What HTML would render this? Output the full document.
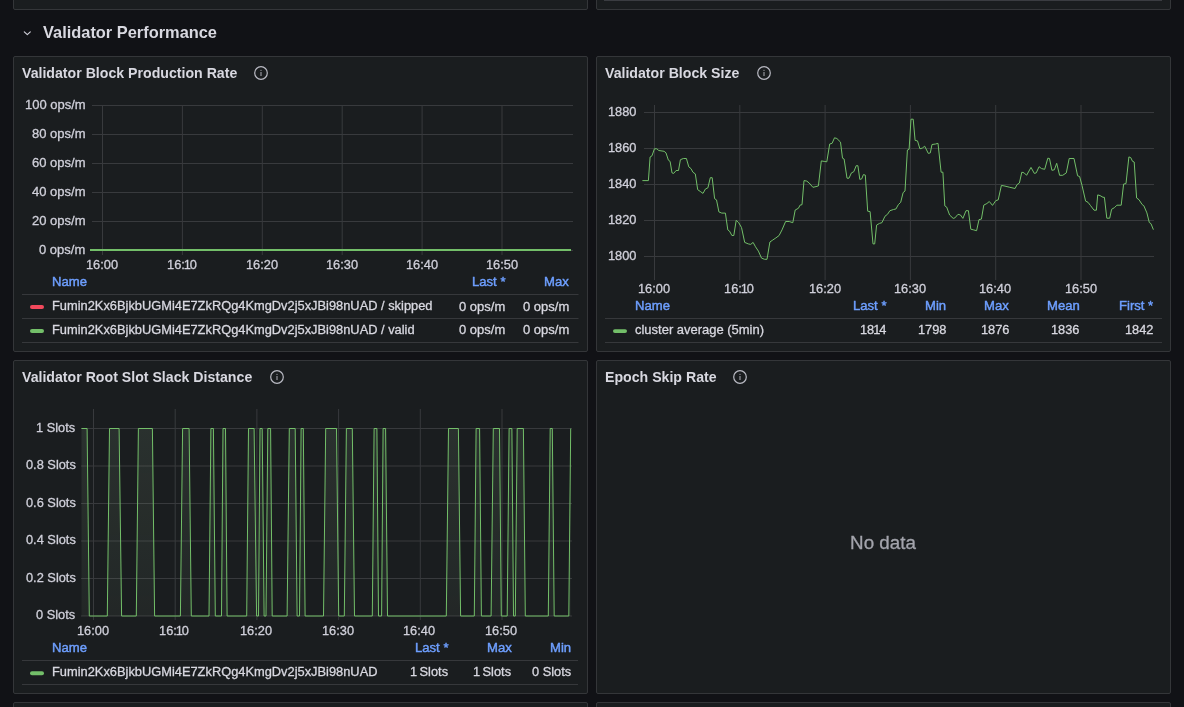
<!DOCTYPE html>
<html><head><meta charset="utf-8"><style>
html,body{margin:0;padding:0;width:1184px;height:707px;overflow:hidden;background:#111216;}
body{position:relative;font-family:"Liberation Sans",sans-serif;}
.p{position:absolute;background:#1a1d1f;border:1px solid #343639;border-radius:2px;}
.t{position:absolute;white-space:nowrap;line-height:1;will-change:transform;-webkit-text-stroke:0.3px currentColor;}
</style></head><body>
<div class="p" style="left:13px;top:-40px;width:573px;height:48px"></div>
<div class="p" style="left:596px;top:-40px;width:573px;height:48px"></div>
<div style="position:absolute;left:604px;top:0;width:558px;height:1px;background:#3a3c41"></div>
<svg style="position:absolute;left:0;top:0" width="60" height="50"><polyline points="24.3,31.8 27.3,34.6 30.3,31.8" fill="none" stroke="#d0d0da" stroke-width="1.15" stroke-linecap="round" stroke-linejoin="round"/></svg>
<div class="t" style="left:42.5px;top:23.82px;font-size:16.4px;font-weight:700;color:#d8d8e0;-webkit-text-stroke:0;">Validator Performance</div>
<div class="p" style="left:13px;top:56px;width:573px;height:294px"></div>
<div class="p" style="left:596px;top:56px;width:573px;height:294px"></div>
<div class="p" style="left:13px;top:360px;width:573px;height:332px"></div>
<div class="p" style="left:596px;top:360px;width:573px;height:332px"></div>
<div class="p" style="left:13px;top:702px;width:573px;height:56px"></div>
<div class="p" style="left:596px;top:702px;width:573px;height:56px"></div>
<div class="t" style="left:21.6px;top:66.42px;font-size:14.15px;font-weight:700;color:#d8d8e0;-webkit-text-stroke:0;">Validator Block Production Rate</div>
<svg style="position:absolute;left:253px;top:65.2px" width="16" height="16"><circle cx="8" cy="8" r="6.3" fill="none" stroke="#b9bac3" stroke-width="1.2"/><rect x="7.45" y="7.0" width="1.1" height="4.0" fill="#9fa0a8"/><circle cx="8" cy="5.3" r="0.65" fill="#9fa0a8"/></svg>
<div class="t" style="left:605.4px;top:66.42px;font-size:14.15px;font-weight:700;color:#d8d8e0;-webkit-text-stroke:0;">Validator Block Size</div>
<svg style="position:absolute;left:756px;top:65.2px" width="16" height="16"><circle cx="8" cy="8" r="6.3" fill="none" stroke="#b9bac3" stroke-width="1.2"/><rect x="7.45" y="7.0" width="1.1" height="4.0" fill="#9fa0a8"/><circle cx="8" cy="5.3" r="0.65" fill="#9fa0a8"/></svg>
<div class="t" style="left:21.6px;top:370.42px;font-size:14.15px;font-weight:700;color:#d8d8e0;-webkit-text-stroke:0;">Validator Root Slot Slack Distance</div>
<svg style="position:absolute;left:269.2px;top:369.2px" width="16" height="16"><circle cx="8" cy="8" r="6.3" fill="none" stroke="#b9bac3" stroke-width="1.2"/><rect x="7.45" y="7.0" width="1.1" height="4.0" fill="#9fa0a8"/><circle cx="8" cy="5.3" r="0.65" fill="#9fa0a8"/></svg>
<div class="t" style="left:605.4px;top:370.42px;font-size:14.15px;font-weight:700;color:#d8d8e0;-webkit-text-stroke:0;">Epoch Skip Rate</div>
<svg style="position:absolute;left:732px;top:369.2px" width="16" height="16"><circle cx="8" cy="8" r="6.3" fill="none" stroke="#b9bac3" stroke-width="1.2"/><rect x="7.45" y="7.0" width="1.1" height="4.0" fill="#9fa0a8"/><circle cx="8" cy="5.3" r="0.65" fill="#9fa0a8"/></svg>
<svg style="position:absolute;left:0;top:0" width="1184" height="707"><line x1="92" y1="105.5" x2="573" y2="105.5" stroke="#383a3d" stroke-width="1"/><line x1="92" y1="134.5" x2="573" y2="134.5" stroke="#383a3d" stroke-width="1"/><line x1="92" y1="163.5" x2="573" y2="163.5" stroke="#383a3d" stroke-width="1"/><line x1="92" y1="192.5" x2="573" y2="192.5" stroke="#383a3d" stroke-width="1"/><line x1="92" y1="221.5" x2="573" y2="221.5" stroke="#383a3d" stroke-width="1"/><line x1="92" y1="250.5" x2="573" y2="250.5" stroke="#383a3d" stroke-width="1"/><line x1="102.5" y1="105" x2="102.5" y2="255" stroke="#383a3d" stroke-width="1"/><line x1="182.4" y1="105" x2="182.4" y2="255" stroke="#383a3d" stroke-width="1"/><line x1="262.3" y1="105" x2="262.3" y2="255" stroke="#383a3d" stroke-width="1"/><line x1="342.2" y1="105" x2="342.2" y2="255" stroke="#383a3d" stroke-width="1"/><line x1="422.1" y1="105" x2="422.1" y2="255" stroke="#383a3d" stroke-width="1"/><line x1="502.0" y1="105" x2="502.0" y2="255" stroke="#383a3d" stroke-width="1"/><line x1="90" y1="250" x2="571" y2="250" stroke="#73bf69" stroke-width="2"/><line x1="644" y1="112.5" x2="1154" y2="112.5" stroke="#383a3d" stroke-width="1"/><line x1="644" y1="148.5" x2="1154" y2="148.5" stroke="#383a3d" stroke-width="1"/><line x1="644" y1="184.5" x2="1154" y2="184.5" stroke="#383a3d" stroke-width="1"/><line x1="644" y1="220.5" x2="1154" y2="220.5" stroke="#383a3d" stroke-width="1"/><line x1="644" y1="256.5" x2="1154" y2="256.5" stroke="#383a3d" stroke-width="1"/><line x1="654.5" y1="105" x2="654.5" y2="280" stroke="#383a3d" stroke-width="1"/><line x1="739.8" y1="105" x2="739.8" y2="280" stroke="#383a3d" stroke-width="1"/><line x1="825.1" y1="105" x2="825.1" y2="280" stroke="#383a3d" stroke-width="1"/><line x1="910.4" y1="105" x2="910.4" y2="280" stroke="#383a3d" stroke-width="1"/><line x1="995.7" y1="105" x2="995.7" y2="280" stroke="#383a3d" stroke-width="1"/><line x1="1081.0" y1="105" x2="1081.0" y2="280" stroke="#383a3d" stroke-width="1"/><polyline points="642.4,180.6 648.4,180.6 650.1,157.0 652.0,155.8 654.4,148.8 656.8,148.8 658.8,150.5 664.1,151.3 666.0,152.9 668.4,160.2 670.1,161.4 672.0,172.9 673.7,173.4 676.1,170.5 678.5,170.5 680.4,159.7 683.3,158.5 686.4,158.5 688.8,166.9 691.0,168.6 692.9,172.2 695.3,173.9 697.7,189.7 700.2,191.4 703.0,193.4 705.4,189.0 707.9,187.8 710.3,177.7 712.2,177.7 714.6,198.7 716.5,199.9 718.9,211.9 721.8,213.1 725.4,213.1 727.8,229.9 729.5,231.1 731.9,235.5 733.8,235.5 736.2,220.3 738.7,222.7 741.5,227.5 744.7,242.4 748.3,243.9 750.7,244.4 753.1,242.4 755.5,246.8 758.4,251.1 761.5,258.1 764.6,259.3 767.0,259.3 769.9,242.0 772.8,240.0 775.9,237.9 779.1,235.5 782.0,229.9 785.6,221.5 789.2,221.5 792.8,222.7 795.2,210.0 798.4,208.3 800.1,205.1 802.0,204.7 804.0,180.6 806.8,181.1 809.2,183.0 812.9,187.3 816.0,186.6 818.4,185.9 821.3,160.9 824.2,161.4 826.8,161.8 829.7,144.0 832.1,143.3 834.5,137.8 836.9,138.5 840.5,142.1 842.5,158.2 844.1,159.0 847.0,178.2 849.0,178.2 851.4,172.9 853.8,171.7 856.2,165.7 857.9,165.7 859.8,179.4 861.7,178.9 863.4,174.6 865.3,175.1 867.7,211.2 870.1,211.6 873.0,243.9 874.7,243.9 876.6,225.1 879.5,223.4 881.9,222.7 885.0,216.2 887.5,214.3 889.9,210.7 893.5,209.5 895.9,209.0 898.3,204.7 900.7,202.3 903.1,192.6 905.0,191.0 907.4,150.0 909.1,149.3 911.0,119.2 913.2,119.2 915.1,140.4 917.5,140.9 919.9,148.8 922.3,148.1 924.7,146.2 928.3,153.4 930.3,152.9 932.0,144.5 935.6,144.0 938.0,143.3 941.1,172.2 942.9,172.2 944.8,205.9 946.7,207.1 949.6,215.0 953.2,218.4 954.9,217.9 958.0,214.3 960.5,215.0 962.9,218.4 966.0,210.7 968.4,210.7 970.8,229.2 973.7,229.9 976.6,230.7 979.0,219.6 981.4,219.1 983.8,205.1 986.9,203.5 989.3,201.5 992.5,205.4 995.8,200.6 998.2,199.9 1001.4,185.4 1005.0,186.1 1009.8,187.3 1015.1,188.5 1017.0,184.7 1019.4,183.0 1021.8,172.2 1024.2,172.9 1026.6,175.3 1031.0,167.4 1034.3,173.4 1036.2,172.9 1039.1,166.7 1041.5,168.6 1044.7,169.3 1047.8,158.2 1049.5,158.5 1051.9,170.3 1054.3,169.8 1056.7,163.3 1059.6,175.3 1062.7,175.3 1066.3,172.9 1069.2,158.5 1074.0,158.5 1077.6,175.8 1079.6,176.5 1082.0,185.4 1085.6,201.1 1088.0,202.3 1090.4,205.4 1094.0,210.2 1096.4,210.2 1097.7,194.9 1100.1,195.6 1103.0,197.3 1104.4,197.3 1106.8,218.2 1109.7,218.2 1111.6,209.3 1114.5,207.6 1116.9,205.2 1121.2,205.2 1123.6,184.1 1126.0,183.6 1128.9,156.9 1130.8,157.7 1132.5,161.3 1134.2,162.0 1136.6,198.0 1139.0,199.7 1142.1,204.5 1143.8,205.7 1146.9,212.9 1149.3,222.5 1151.0,223.7 1153.4,229.7" fill="none" stroke="#73bf69" stroke-width="1" stroke-linejoin="round"/><line x1="81" y1="428.5" x2="572" y2="428.5" stroke="#383a3d" stroke-width="1"/><line x1="81" y1="466.0" x2="572" y2="466.0" stroke="#383a3d" stroke-width="1"/><line x1="81" y1="503.5" x2="572" y2="503.5" stroke="#383a3d" stroke-width="1"/><line x1="81" y1="541.0" x2="572" y2="541.0" stroke="#383a3d" stroke-width="1"/><line x1="81" y1="578.5" x2="572" y2="578.5" stroke="#383a3d" stroke-width="1"/><line x1="81" y1="616.0" x2="572" y2="616.0" stroke="#383a3d" stroke-width="1"/><line x1="93.5" y1="409" x2="93.5" y2="620" stroke="#383a3d" stroke-width="1"/><line x1="175.2" y1="409" x2="175.2" y2="620" stroke="#383a3d" stroke-width="1"/><line x1="256.9" y1="409" x2="256.9" y2="620" stroke="#383a3d" stroke-width="1"/><line x1="338.6" y1="409" x2="338.6" y2="620" stroke="#383a3d" stroke-width="1"/><line x1="420.3" y1="409" x2="420.3" y2="620" stroke="#383a3d" stroke-width="1"/><line x1="502.0" y1="409" x2="502.0" y2="620" stroke="#383a3d" stroke-width="1"/><defs><linearGradient id="gf" x1="0" y1="0" x2="0" y2="1"><stop offset="0" stop-color="#9ab896" stop-opacity="0.13"/><stop offset="1" stop-color="#9ab896" stop-opacity="0.07"/></linearGradient></defs><polygon points="81.5,428.5 87.1,428.5 89.3,616.0 107.3,616.0 109.5,428.5 119.1,428.5 121.6,616.0 136.3,616.0 138.4,428.5 152.4,428.5 154.6,616.0 180.4,616.0 182.6,428.5 189.1,428.5 191.3,616.0 209.0,616.0 210.9,428.5 213.4,428.5 215.3,616.0 221.5,616.0 223.0,428.5 225.5,428.5 227.1,616.0 246.7,616.0 248.5,428.5 254.1,428.5 256.6,616.0 258.5,616.0 260.0,428.5 262.2,428.5 264.1,616.0 266.0,616.0 267.8,428.5 270.6,428.5 272.2,616.0 287.1,616.0 289.3,428.5 295.2,428.5 297.1,616.0 299.5,616.0 301.1,428.5 303.3,428.5 305.1,616.0 323.5,616.0 325.7,428.5 336.5,428.5 338.7,616.0 344.3,616.0 346.4,428.5 352.3,428.5 354.5,616.0 372.3,616.0 374.1,428.5 376.9,428.5 378.5,616.0 381.6,616.0 383.1,428.5 385.6,428.5 387.5,616.0 446.3,616.0 448.5,428.5 458.4,428.5 460.6,616.0 474.3,616.0 476.1,428.5 479.6,428.5 481.4,616.0 491.1,616.0 493.3,428.5 499.5,428.5 501.3,616.0 507.2,616.0 509.1,428.5 511.9,428.5 513.5,616.0 515.3,616.0 517.2,428.5 523.4,428.5 525.3,616.0 548.3,616.0 550.2,428.5 552.3,428.5 554.2,616.0 568.8,616.0 570.7,428.5 570.7,616.0 81.5,616.0" fill="url(#gf)"/><polyline points="81.5,428.5 87.1,428.5 89.3,616.0 107.3,616.0 109.5,428.5 119.1,428.5 121.6,616.0 136.3,616.0 138.4,428.5 152.4,428.5 154.6,616.0 180.4,616.0 182.6,428.5 189.1,428.5 191.3,616.0 209.0,616.0 210.9,428.5 213.4,428.5 215.3,616.0 221.5,616.0 223.0,428.5 225.5,428.5 227.1,616.0 246.7,616.0 248.5,428.5 254.1,428.5 256.6,616.0 258.5,616.0 260.0,428.5 262.2,428.5 264.1,616.0 266.0,616.0 267.8,428.5 270.6,428.5 272.2,616.0 287.1,616.0 289.3,428.5 295.2,428.5 297.1,616.0 299.5,616.0 301.1,428.5 303.3,428.5 305.1,616.0 323.5,616.0 325.7,428.5 336.5,428.5 338.7,616.0 344.3,616.0 346.4,428.5 352.3,428.5 354.5,616.0 372.3,616.0 374.1,428.5 376.9,428.5 378.5,616.0 381.6,616.0 383.1,428.5 385.6,428.5 387.5,616.0 446.3,616.0 448.5,428.5 458.4,428.5 460.6,616.0 474.3,616.0 476.1,428.5 479.6,428.5 481.4,616.0 491.1,616.0 493.3,428.5 499.5,428.5 501.3,616.0 507.2,616.0 509.1,428.5 511.9,428.5 513.5,616.0 515.3,616.0 517.2,428.5 523.4,428.5 525.3,616.0 548.3,616.0 550.2,428.5 552.3,428.5 554.2,616.0 568.8,616.0 570.7,428.5" fill="none" stroke="#73bf69" stroke-width="1" stroke-linejoin="round"/><line x1="22" y1="294.5" x2="578.5" y2="294.5" stroke="#36383b" stroke-width="1"/><line x1="22" y1="318.5" x2="578.5" y2="318.5" stroke="#36383b" stroke-width="1"/><line x1="22" y1="342.5" x2="578.5" y2="342.5" stroke="#36383b" stroke-width="1"/><line x1="605" y1="318.5" x2="1162" y2="318.5" stroke="#36383b" stroke-width="1"/><line x1="605" y1="342.5" x2="1162" y2="342.5" stroke="#36383b" stroke-width="1"/><line x1="22" y1="660.5" x2="578" y2="660.5" stroke="#36383b" stroke-width="1"/><line x1="22" y1="684.5" x2="578" y2="684.5" stroke="#36383b" stroke-width="1"/><rect x="30" y="305" width="14" height="4" rx="2" fill="#f2495c"/><rect x="30" y="329" width="14" height="4" rx="2" fill="#73bf69"/><rect x="613" y="329.2" width="14" height="3.8" rx="1.9" fill="#73bf69"/><rect x="30" y="671.2" width="14" height="4" rx="2" fill="#73bf69"/></svg>
<div class="t" style="right:1098.4px;top:97.60px;font-size:13px;font-weight:400;color:#d0d0da;">100 ops/m</div>
<div class="t" style="right:1098.4px;top:126.60px;font-size:13px;font-weight:400;color:#d0d0da;">80 ops/m</div>
<div class="t" style="right:1098.4px;top:155.60px;font-size:13px;font-weight:400;color:#d0d0da;">60 ops/m</div>
<div class="t" style="right:1098.4px;top:184.60px;font-size:13px;font-weight:400;color:#d0d0da;">40 ops/m</div>
<div class="t" style="right:1098.4px;top:213.60px;font-size:13px;font-weight:400;color:#d0d0da;">20 ops/m</div>
<div class="t" style="right:1098.4px;top:242.60px;font-size:13px;font-weight:400;color:#d0d0da;">0 ops/m</div>
<div class="t" style="left:101.8px;transform:translateX(-50%);top:259.36px;font-size:12.8px;font-weight:400;color:#d0d0da;">16:00</div>
<div class="t" style="left:181.75px;transform:translateX(-50%);top:259.36px;font-size:12.8px;font-weight:400;color:#d0d0da;">16:<span style="margin-left:-1.1px;letter-spacing:-1px">1</span>0</div>
<div class="t" style="left:261.7px;transform:translateX(-50%);top:259.36px;font-size:12.8px;font-weight:400;color:#d0d0da;">16:20</div>
<div class="t" style="left:341.65000000000003px;transform:translateX(-50%);top:259.36px;font-size:12.8px;font-weight:400;color:#d0d0da;">16:30</div>
<div class="t" style="left:421.6px;transform:translateX(-50%);top:259.36px;font-size:12.8px;font-weight:400;color:#d0d0da;">16:40</div>
<div class="t" style="left:501.55px;transform:translateX(-50%);top:259.36px;font-size:12.8px;font-weight:400;color:#d0d0da;">16:50</div>
<div class="t" style="left:52.4px;top:275.31px;font-size:13.1px;font-weight:400;color:#6e9fff;-webkit-text-stroke:0.45px currentColor;">Name</div>
<div class="t" style="right:678.6px;top:275.31px;font-size:13.1px;font-weight:400;color:#6e9fff;-webkit-text-stroke:0.45px currentColor;">Last *</div>
<div class="t" style="right:615.4px;top:275.31px;font-size:13.1px;font-weight:400;color:#6e9fff;-webkit-text-stroke:0.45px currentColor;">Max</div>
<div class="t" style="left:52.4px;top:299.62px;font-size:12.85px;font-weight:400;color:#d8d8e0;">Fumin2Kx6BjkbUGMi4E7ZkRQg4KmgDv2j5xJBi98nUAD / skipped</div>
<div class="t" style="right:678.3px;top:299.50px;font-size:13px;font-weight:400;color:#d8d8e0;">0 ops/m</div>
<div class="t" style="right:614.4px;top:299.50px;font-size:13px;font-weight:400;color:#d8d8e0;">0 ops/m</div>
<div class="t" style="left:52.4px;top:323.52px;font-size:12.85px;font-weight:400;color:#d8d8e0;">Fumin2Kx6BjkbUGMi4E7ZkRQg4KmgDv2j5xJBi98nUAD / valid</div>
<div class="t" style="right:678.3px;top:323.40px;font-size:13px;font-weight:400;color:#d8d8e0;">0 ops/m</div>
<div class="t" style="right:614.4px;top:323.40px;font-size:13px;font-weight:400;color:#d8d8e0;">0 ops/m</div>
<div class="t" style="right:547.4px;top:106.26px;font-size:12.8px;font-weight:400;color:#d0d0da;">1880</div>
<div class="t" style="right:547.4px;top:142.26px;font-size:12.8px;font-weight:400;color:#d0d0da;">1860</div>
<div class="t" style="right:547.4px;top:178.26px;font-size:12.8px;font-weight:400;color:#d0d0da;">1840</div>
<div class="t" style="right:547.4px;top:214.26px;font-size:12.8px;font-weight:400;color:#d0d0da;">1820</div>
<div class="t" style="right:547.4px;top:250.26px;font-size:12.8px;font-weight:400;color:#d0d0da;">1800</div>
<div class="t" style="left:653.7px;transform:translateX(-50%);top:283.16px;font-size:12.8px;font-weight:400;color:#d0d0da;">16:00</div>
<div class="t" style="left:739.1px;transform:translateX(-50%);top:283.16px;font-size:12.8px;font-weight:400;color:#d0d0da;">16:<span style="margin-left:-1.1px;letter-spacing:-1px">1</span>0</div>
<div class="t" style="left:824.5px;transform:translateX(-50%);top:283.16px;font-size:12.8px;font-weight:400;color:#d0d0da;">16:20</div>
<div class="t" style="left:909.9000000000001px;transform:translateX(-50%);top:283.16px;font-size:12.8px;font-weight:400;color:#d0d0da;">16:30</div>
<div class="t" style="left:995.3000000000001px;transform:translateX(-50%);top:283.16px;font-size:12.8px;font-weight:400;color:#d0d0da;">16:40</div>
<div class="t" style="left:1080.7px;transform:translateX(-50%);top:283.16px;font-size:12.8px;font-weight:400;color:#d0d0da;">16:50</div>
<div class="t" style="left:635.4px;top:299.11px;font-size:13.1px;font-weight:400;color:#6e9fff;-webkit-text-stroke:0.45px currentColor;">Name</div>
<div class="t" style="right:297.6px;top:299.11px;font-size:13.1px;font-weight:400;color:#6e9fff;-webkit-text-stroke:0.45px currentColor;">Last *</div>
<div class="t" style="right:297.6px;top:323.56px;font-size:12.8px;font-weight:400;color:#d8d8e0;">18<span style="margin-left:-1.1px;letter-spacing:-1px">1</span>4</div>
<div class="t" style="right:237.60000000000002px;top:299.11px;font-size:13.1px;font-weight:400;color:#6e9fff;-webkit-text-stroke:0.45px currentColor;">Min</div>
<div class="t" style="right:237.60000000000002px;top:323.56px;font-size:12.8px;font-weight:400;color:#d8d8e0;">1798</div>
<div class="t" style="right:175px;top:299.11px;font-size:13.1px;font-weight:400;color:#6e9fff;-webkit-text-stroke:0.45px currentColor;">Max</div>
<div class="t" style="right:175px;top:323.56px;font-size:12.8px;font-weight:400;color:#d8d8e0;">1876</div>
<div class="t" style="right:104.09999999999991px;top:299.11px;font-size:13.1px;font-weight:400;color:#6e9fff;-webkit-text-stroke:0.45px currentColor;">Mean</div>
<div class="t" style="right:104.09999999999991px;top:323.56px;font-size:12.8px;font-weight:400;color:#d8d8e0;">1836</div>
<div class="t" style="right:30.799999999999955px;top:299.11px;font-size:13.1px;font-weight:400;color:#6e9fff;-webkit-text-stroke:0.45px currentColor;">First *</div>
<div class="t" style="right:30.799999999999955px;top:323.56px;font-size:12.8px;font-weight:400;color:#d8d8e0;">1842</div>
<div class="t" style="left:635.2px;top:323.41px;font-size:12.98px;font-weight:400;color:#d8d8e0;">cluster average (5min)</div>
<div class="t" style="right:1108.6px;top:421.96px;font-size:12.8px;font-weight:400;color:#d0d0da;">1 Slots</div>
<div class="t" style="right:1108.6px;top:459.46px;font-size:12.8px;font-weight:400;color:#d0d0da;">0.8 Slots</div>
<div class="t" style="right:1108.6px;top:496.96px;font-size:12.8px;font-weight:400;color:#d0d0da;">0.6 Slots</div>
<div class="t" style="right:1108.6px;top:534.46px;font-size:12.8px;font-weight:400;color:#d0d0da;">0.4 Slots</div>
<div class="t" style="right:1108.6px;top:571.96px;font-size:12.8px;font-weight:400;color:#d0d0da;">0.2 Slots</div>
<div class="t" style="right:1108.6px;top:609.46px;font-size:12.8px;font-weight:400;color:#d0d0da;">0 Slots</div>
<div class="t" style="left:92.8px;transform:translateX(-50%);top:625.36px;font-size:12.8px;font-weight:400;color:#d0d0da;">16:00</div>
<div class="t" style="left:174.39999999999998px;transform:translateX(-50%);top:625.36px;font-size:12.8px;font-weight:400;color:#d0d0da;">16:<span style="margin-left:-1.1px;letter-spacing:-1px">1</span>0</div>
<div class="t" style="left:256.0px;transform:translateX(-50%);top:625.36px;font-size:12.8px;font-weight:400;color:#d0d0da;">16:20</div>
<div class="t" style="left:337.59999999999997px;transform:translateX(-50%);top:625.36px;font-size:12.8px;font-weight:400;color:#d0d0da;">16:30</div>
<div class="t" style="left:419.2px;transform:translateX(-50%);top:625.36px;font-size:12.8px;font-weight:400;color:#d0d0da;">16:40</div>
<div class="t" style="left:500.8px;transform:translateX(-50%);top:625.36px;font-size:12.8px;font-weight:400;color:#d0d0da;">16:50</div>
<div class="t" style="left:52.4px;top:641.21px;font-size:13.1px;font-weight:400;color:#6e9fff;-webkit-text-stroke:0.45px currentColor;">Name</div>
<div class="t" style="right:735.7px;top:641.21px;font-size:13.1px;font-weight:400;color:#6e9fff;-webkit-text-stroke:0.45px currentColor;">Last *</div>
<div class="t" style="right:735.7px;top:665.86px;font-size:12.8px;font-weight:400;color:#d8d8e0;"><span style="margin-left:-1.1px;letter-spacing:-1px">1</span> Slots</div>
<div class="t" style="right:672.7px;top:641.21px;font-size:13.1px;font-weight:400;color:#6e9fff;-webkit-text-stroke:0.45px currentColor;">Max</div>
<div class="t" style="right:672.7px;top:665.86px;font-size:12.8px;font-weight:400;color:#d8d8e0;"><span style="margin-left:-1.1px;letter-spacing:-1px">1</span> Slots</div>
<div class="t" style="right:613.3px;top:641.21px;font-size:13.1px;font-weight:400;color:#6e9fff;-webkit-text-stroke:0.45px currentColor;">Min</div>
<div class="t" style="right:613.3px;top:665.86px;font-size:12.8px;font-weight:400;color:#d8d8e0;">0 Slots</div>
<div class="t" style="left:52.4px;top:665.82px;font-size:12.85px;font-weight:400;color:#d8d8e0;">Fumin2Kx6BjkbUGMi4E7ZkRQg4KmgDv2j5xJBi98nUAD</div>
<div class="t" style="left:882.8px;transform:translateX(-50%);top:534.19px;font-size:18.8px;font-weight:400;color:#a3a4ac;">No data</div>

</body></html>
